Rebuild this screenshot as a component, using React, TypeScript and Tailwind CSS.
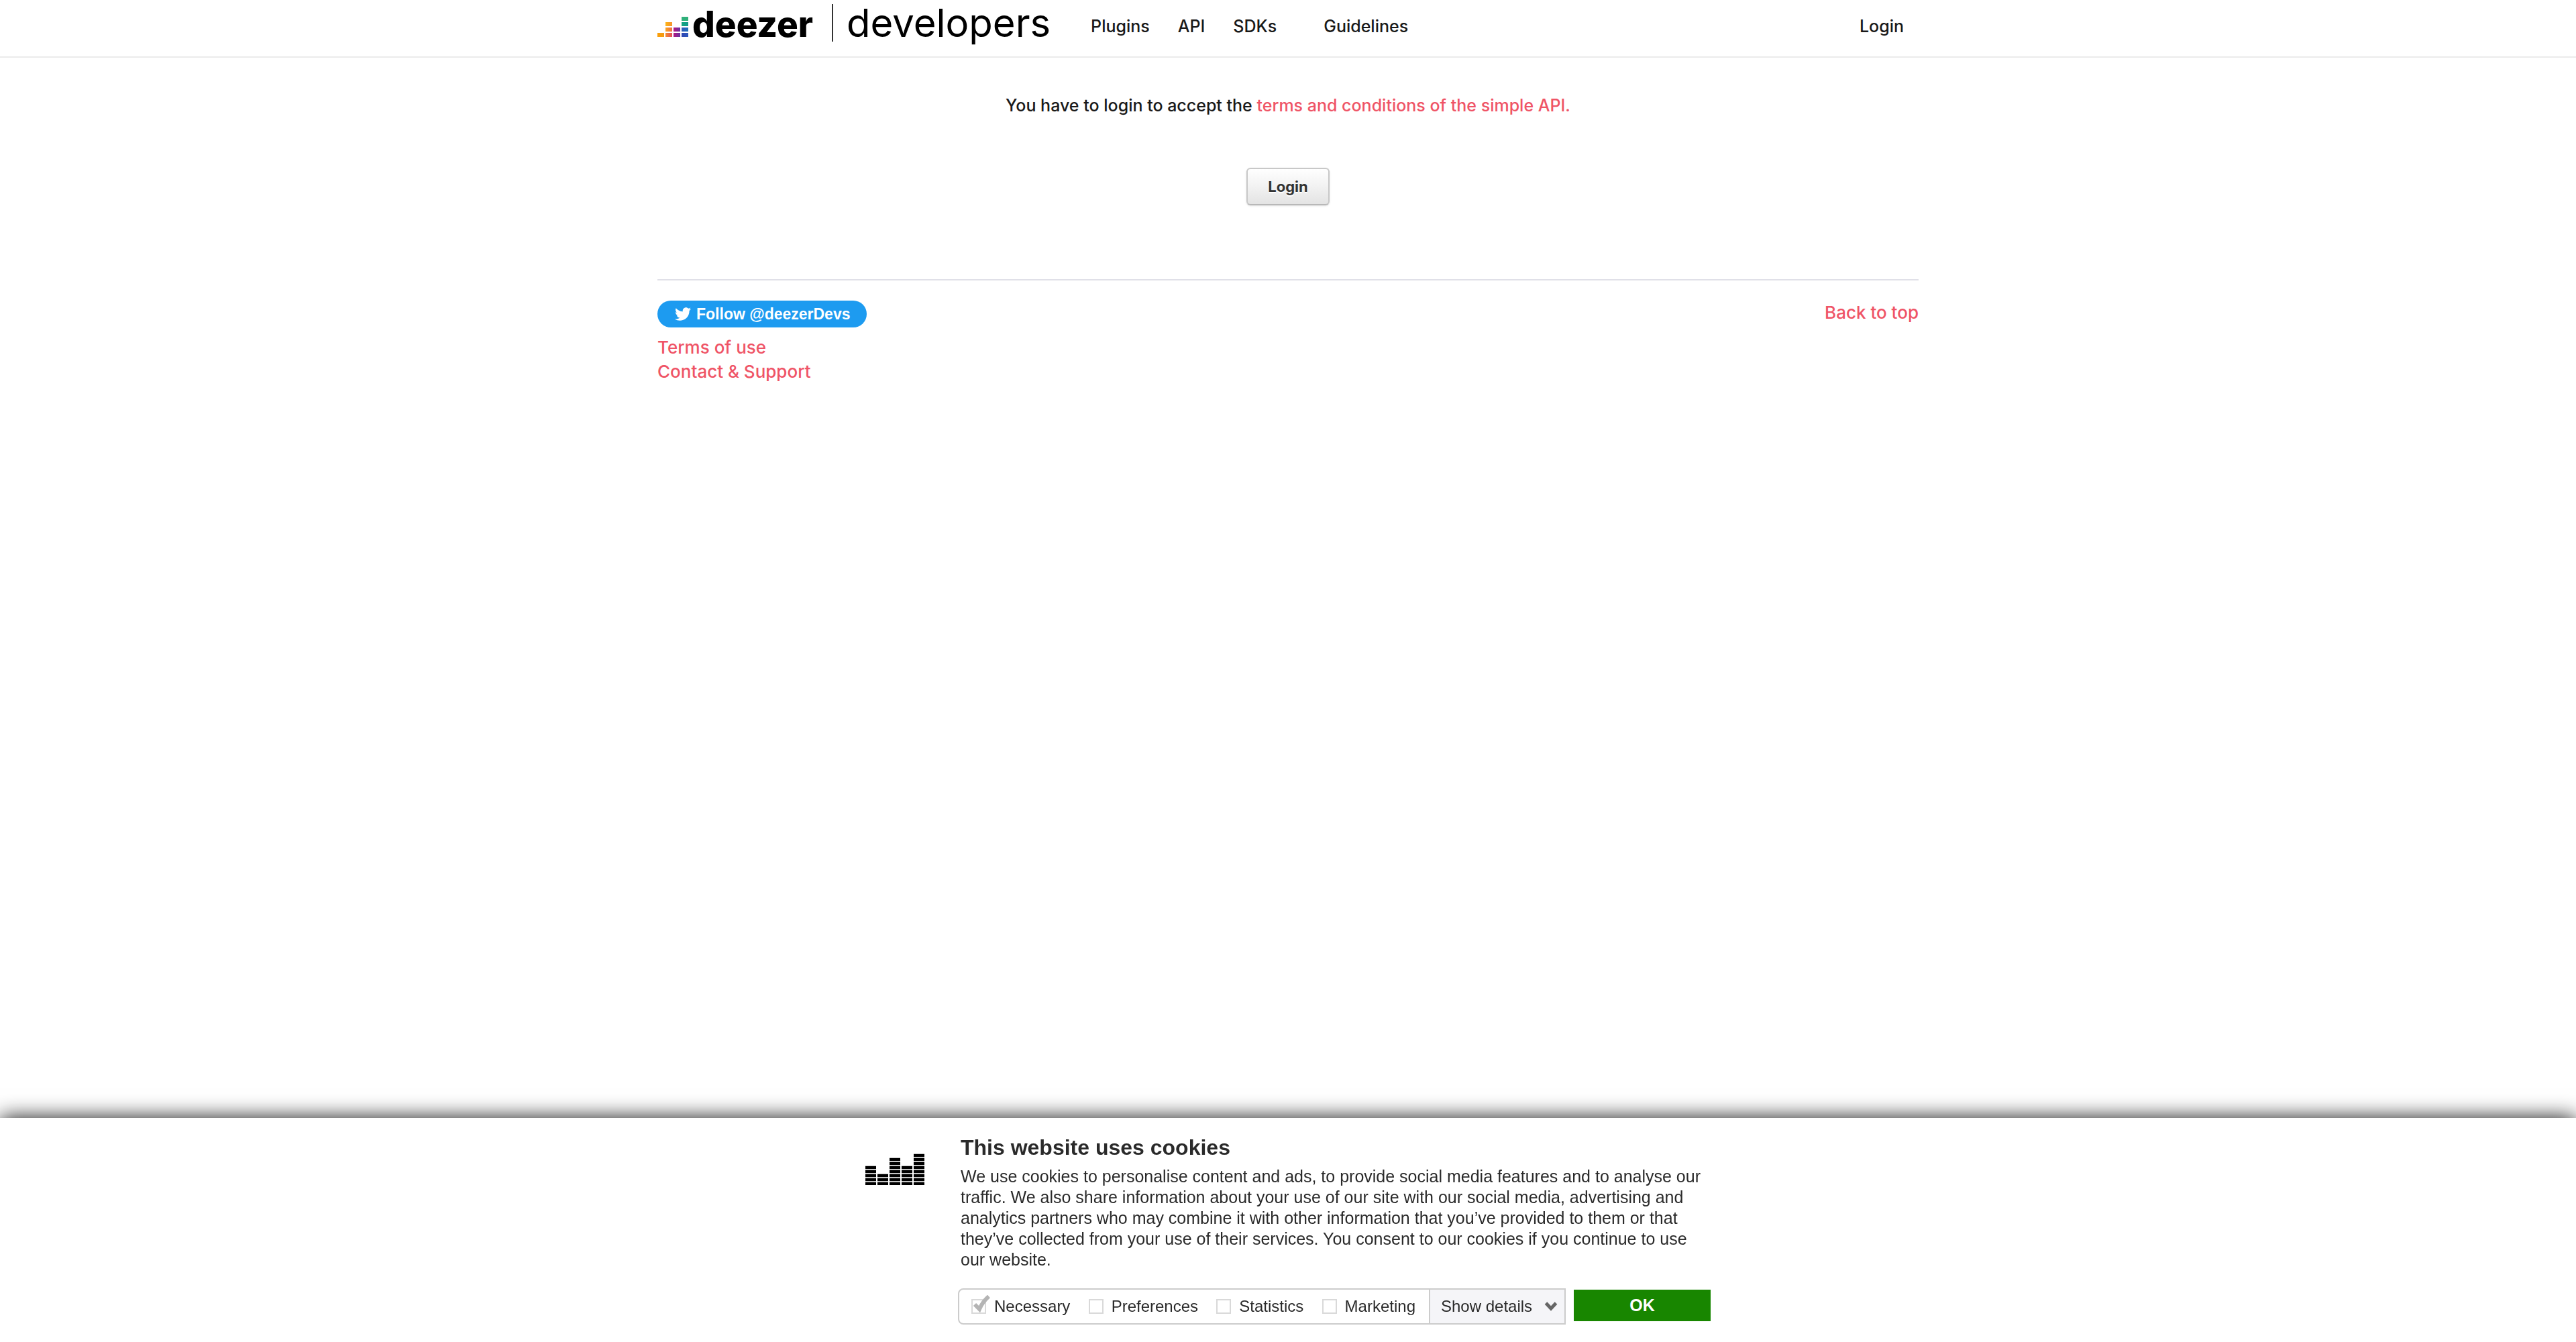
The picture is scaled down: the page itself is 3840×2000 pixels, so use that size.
import { FaTwitter } from "react-icons/fa";

const LOGO_CELLS: { column: number; row: number; fill: string }[] = [
  { column: 0, row: 3, fill: "url(#amber)" },
  { column: 1, row: 1, fill: "url(#yellow)" },
  { column: 1, row: 2, fill: "url(#orange)" },
  { column: 1, row: 3, fill: "url(#coral)" },
  { column: 2, row: 2, fill: "url(#magenta)" },
  { column: 2, row: 3, fill: "url(#magenta)" },
  { column: 3, row: 0, fill: "#2fb07a" },
  { column: 3, row: 1, fill: "url(#teal)" },
  { column: 3, row: 2, fill: "url(#azure)" },
  { column: 3, row: 3, fill: "url(#blue)" },
];

const GRADIENTS = [
  { id: "amber", from: "#fa9f0a", to: "#f49a12" },
  { id: "yellow", from: "#fdb414", to: "#f59331" },
  { id: "orange", from: "#fba41c", to: "#ec6d46" },
  { id: "coral", from: "#f68a2e", to: "#e0505c" },
  { id: "magenta", from: "#b3177f", to: "#6732a5" },
  { id: "teal", from: "#12a57e", to: "#10998c" },
  { id: "azure", from: "#3158b8", to: "#1c72bd" },
  { id: "blue", from: "#2f45b2", to: "#2c57bd" },
];

function LogoMark() {
  return (
    <svg width="46" height="30" viewBox="0 0 46 30" aria-hidden="true" className="shrink-0">
      <defs>
        {GRADIENTS.map((g) => (
          <linearGradient key={g.id} id={g.id}>
            <stop offset="0" stopColor={g.from} />
            <stop offset="1" stopColor={g.to} />
          </linearGradient>
        ))}
      </defs>
      {LOGO_CELLS.map((c) => (
        <rect key={`${c.column}-${c.row}`} x={c.column * 12} y={c.row * 8} width="10" height="6" fill={c.fill} />
      ))}
    </svg>
  );
}

function Header() {
  return (
    <header className="border-b-2 border-[#ebebeb]">
      <div className="mx-auto flex h-[84px] max-w-[1880px] items-start text-[25px] leading-[78px] font-medium text-[#191919]">
        <a href="#home" className="flex items-baseline text-black" aria-label="deezer developers">
          <LogoMark />
          <span className="ml-1.5 text-[53px] leading-[72px] font-extrabold">deezer</span>
          <span className="mt-1.5 ml-7 h-14 w-0.5 self-start bg-[#333]" />
          <span className="ml-5 text-[58px] leading-[68px] font-normal">developers</span>
        </a>
        <nav className="ml-[60px] flex gap-[42px]">
          <a href="#plugins">Plugins</a>
          <a href="#api">API</a>
          <a href="#sdks">SDKs</a>
          <a href="#guidelines" className="ml-7">Guidelines</a>
        </nav>
        <a href="#login" className="mr-[22px] ml-auto">Login</a>
      </div>
    </header>
  );
}

function Footer() {
  return (
    <footer className="mt-[110px] flex items-start justify-between border-t-2 border-[#e0e0e8] pt-[30px] text-[26px] leading-9 font-medium text-[#ef5466]">
      <div className="flex flex-col items-start">
        <a
          href="#follow"
          className="mb-3 flex h-10 items-center gap-2 rounded-full bg-[#1d9bf0] pr-6 pl-[26px] font-['Liberation_Sans',sans-serif] text-[23px] font-bold text-white"
        >
          <FaTwitter size={24} aria-hidden="true" />
          Follow @deezerDevs
        </a>
        <a href="#terms">Terms of use</a>
        <a href="#support">Contact &amp; Support</a>
      </div>
      <a href="#top">Back to top</a>
    </footer>
  );
}

function EqualizerIcon() {
  return (
    <svg width="88" height="48" viewBox="0 0 88 48" aria-hidden="true">
      {[5, 3, 7, 5, 8].map((count, column) => (
        <g key={column}>
          <rect x={column * 18} y={48 - count * 6} width="16" height={count * 6 - 1} fill="#c4c4c4" />
          {Array.from({ length: count }, (_, i) => (
            <rect key={i} x={column * 18} y={43 - i * 6} width="16" height="4" fill="#000" />
          ))}
        </g>
      ))}
    </svg>
  );
}

function Option({ label, locked }: { label: string; locked?: boolean }) {
  return (
    <label className="flex items-center gap-3">
      <span className="relative flex">
        <input
          type="checkbox"
          defaultChecked={locked}
          disabled={locked}
          className="size-[22px] appearance-none border-2 border-[#d9d9d9] bg-white"
        />
        {locked && (
          <svg className="absolute -top-1.5 left-0.5" width="26" height="26" viewBox="0 0 26 26" aria-hidden="true">
            <path d="M3 14 L10 21 C13 14 17 8 24 2" fill="none" stroke="#b4b4b4" strokeWidth="6" />
          </svg>
        )}
      </span>
      {label}
    </label>
  );
}

function CookieBanner() {
  return (
    <section
      aria-label="Cookies"
      className="fixed inset-x-0 bottom-0 bg-white pt-[26px] pb-[26px] font-['Liberation_Sans',sans-serif] text-[#2a2a2a] shadow-[0_0_30px_#121212]"
    >
      <div className="mx-auto flex max-w-[1260px] items-start">
        <div className="mt-[27px] mr-[54px] shrink-0">
          <EqualizerIcon />
        </div>
        <div className="flex-1">
          <h2 className="text-[32px] leading-9 font-bold">This website uses cookies</h2>
          <p className="mt-2.5 text-[25px] leading-[31px]">
            We use cookies to personalise content and ads, to provide social media features and to analyse our traffic.
            We also share information about your use of our site with our social media, advertising and analytics
            partners who may combine it with other information that you’ve provided to them or that they’ve collected
            from your use of their services. You consent to our cookies if you continue to use our website.
          </p>
          <div className="mt-[27px] -ml-1 flex items-start gap-3 text-[24px] leading-[50px]">
            <div className="flex flex-1 rounded-l-lg border-2 border-[#ccc]">
              <div className="flex flex-1 items-center justify-between pr-5 pl-[18px]">
                <Option label="Necessary" locked />
                <Option label="Preferences" />
                <Option label="Statistics" />
                <Option label="Marketing" />
              </div>
              <button type="button" className="flex w-[202px] items-center justify-between border-l-2 border-[#ccc] bg-[#f5f5f8] pr-2.5 pl-4">
                Show details
                <svg width="20" height="14" viewBox="0 0 20 14" aria-hidden="true">
                  <path d="M2.500 2 L10 10 L17.500 2" fill="none" stroke="#666" strokeWidth="5" />
                </svg>
              </button>
            </div>
            <button type="button" className="mt-0.5 w-[204px] bg-[#188600] text-[25px] leading-[47px] font-bold text-white">
              OK
            </button>
          </div>
        </div>
      </div>
    </section>
  );
}

export default function App() {
  return (
    <div id="top" className="bg-white font-['Inter',sans-serif] text-[#191919]">
      <Header />
      <div className="mx-auto max-w-[1880px] pt-[53px]">
        <main className="flex flex-col items-center text-[25px] leading-9 font-medium">
          <p>
            You have to login to accept the{" "}
            <a href="#conditions" className="text-[#ef5466]">terms and conditions of the simple API.</a>
          </p>
          <button
            type="button"
            className="mt-[75px] h-14 w-[124px] rounded-md border-2 border-[#c8c8c8] border-b-[#b8b8b8] bg-linear-to-b from-white to-[#e4e4e4] text-[22px] font-bold text-[#333] shadow-sm text-shadow-[0_2px_0_#fff]"
          >
            Login
          </button>
        </main>
        <Footer />
      </div>
      <CookieBanner />
    </div>
  );
}
